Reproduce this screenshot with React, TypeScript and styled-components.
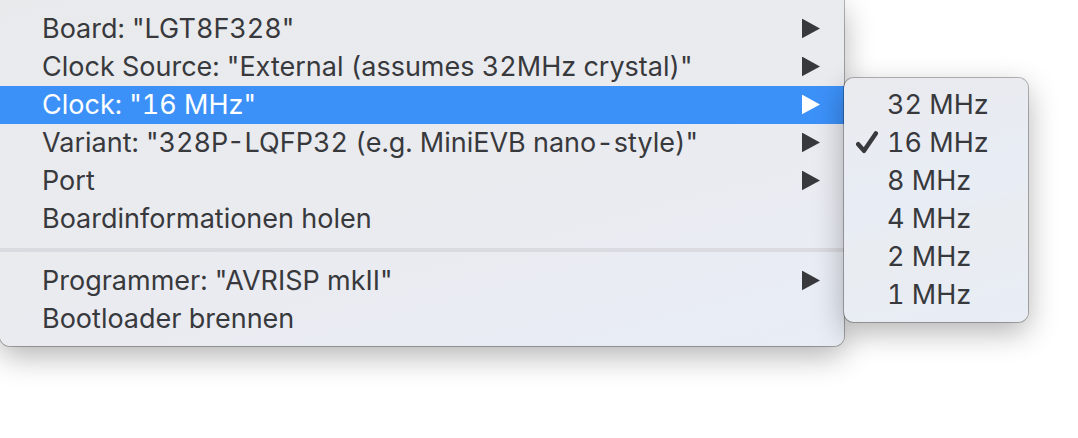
import React from "react";
import styled, { createGlobalStyle } from "styled-components";

const GlobalStyle = createGlobalStyle`
  * { box-sizing: border-box; }
  body {
    margin: 0;
    background: #fff;
    font-family: Inter, "Liberation Sans", sans-serif;
    font-weight: 420;
    font-variant-numeric: tabular-nums;
    overflow-x: hidden;
  }
`;

const Page = styled.main`
  display: flex;
  align-items: flex-start;
  padding: 0 50px 92px 0;
`;

const Panel = styled.div`
  display: flex;
  flex-direction: column;
  color: #38393d;
  box-shadow: 0 0 0 1px rgba(0, 0, 0, 0.28), 0 10px 30px rgba(0, 0, 0, 0.3);
`;

const MainMenu = styled(Panel)`
  flex: 1;
  min-width: 0;
  padding: 10px 0 8px;
  border-radius: 0 0 10px 10px;
  background: linear-gradient(165deg, #e9eaec 0%, #eaebef 50%, #e9ecf3 80%, #e8edf6 100%);
`;

const SubMenu = styled(Panel)`
  position: relative;
  width: 184px;
  margin-top: 78px;
  padding: 8px 0;
  border-radius: 10px;
  background: linear-gradient(165deg, #e9eaee 0%, #e8edf5 50%, #e9ecf0 62%, #e8edf6 100%);
`;

const Item = styled.button<{ $active?: boolean; $nested?: boolean }>`
  display: flex;
  align-items: center;
  width: 100%;
  height: 38px;
  padding: ${(p) => (p.$nested ? "0 12px" : "0 24px 0 42px")};
  border: 0;
  background: ${(p) => (p.$active ? "#3c91f9" : "transparent")};
  color: ${(p) => (p.$active ? "#fff" : "inherit")};
  font: inherit;
  font-size: 27px;
  line-height: 38px;
  text-align: left;
  white-space: nowrap;
`;

const Label = styled.span`
  flex: 1;
`;

const CheckSlot = styled.span`
  display: flex;
  flex: none;
  width: 31px;
`;

const Separator = styled.hr`
  width: 100%;
  height: 4px;
  margin: 10px 0;
  border: 0;
  background: #dadbe0;
`;

const Arrow = () => (
  <svg width="18" height="20" viewBox="0 0 18 20" aria-hidden="true">
    <path d="M0 -0.4 18 9.4 0 19.2Z" fill="currentColor" />
  </svg>
);

const Check = () => (
  <svg width="24" height="24" viewBox="0 0 24 24" aria-hidden="true">
    <path
      d="M2.2 13.2 8 19.8 19.8 2.4"
      fill="none"
      stroke="currentColor"
      strokeWidth="4.4"
      strokeLinecap="round"
      strokeLinejoin="round"
    />
  </svg>
);

interface Entry {
  label: string;
  submenu?: boolean;
  active?: boolean;
}

const boardEntries: Entry[] = [
  { label: 'Board: "LGT8F328"', submenu: true },
  { label: 'Clock Source: "External (assumes 32MHz crystal)"', submenu: true },
  { label: 'Clock: "16 MHz"', submenu: true, active: true },
  { label: 'Variant: "328P-LQFP32 (e.g. MiniEVB nano-style)"', submenu: true },
  { label: "Port", submenu: true },
  { label: "Boardinformationen holen" },
];

const programmerEntries: Entry[] = [
  { label: 'Programmer: "AVRISP mkII"', submenu: true },
  { label: "Bootloader brennen" },
];

const speeds = ["32 MHz", "16 MHz", "8 MHz", "4 MHz", "2 MHz", "1 MHz"];

const MenuEntry = ({ label, submenu, active }: Entry) => (
  <Item
    role="menuitem"
    $active={active}
    aria-haspopup={submenu ? "menu" : undefined}
    aria-expanded={submenu ? !!active : undefined}
  >
    <Label>{label}</Label>
    {submenu && <Arrow />}
  </Item>
);

export default function App() {
  return (
    <>
      <GlobalStyle />
      <Page>
        <MainMenu role="menu">
          {boardEntries.map((e) => (
            <MenuEntry key={e.label} {...e} />
          ))}
          <Separator />
          {programmerEntries.map((e) => (
            <MenuEntry key={e.label} {...e} />
          ))}
        </MainMenu>
        <SubMenu role="menu" aria-label="Clock">
          {speeds.map((s) => (
            <Item key={s} $nested role="menuitemradio" aria-checked={s === "16 MHz"}>
              <CheckSlot>{s === "16 MHz" && <Check />}</CheckSlot>
              <Label>{s}</Label>
            </Item>
          ))}
        </SubMenu>
      </Page>
    </>
  );
}
